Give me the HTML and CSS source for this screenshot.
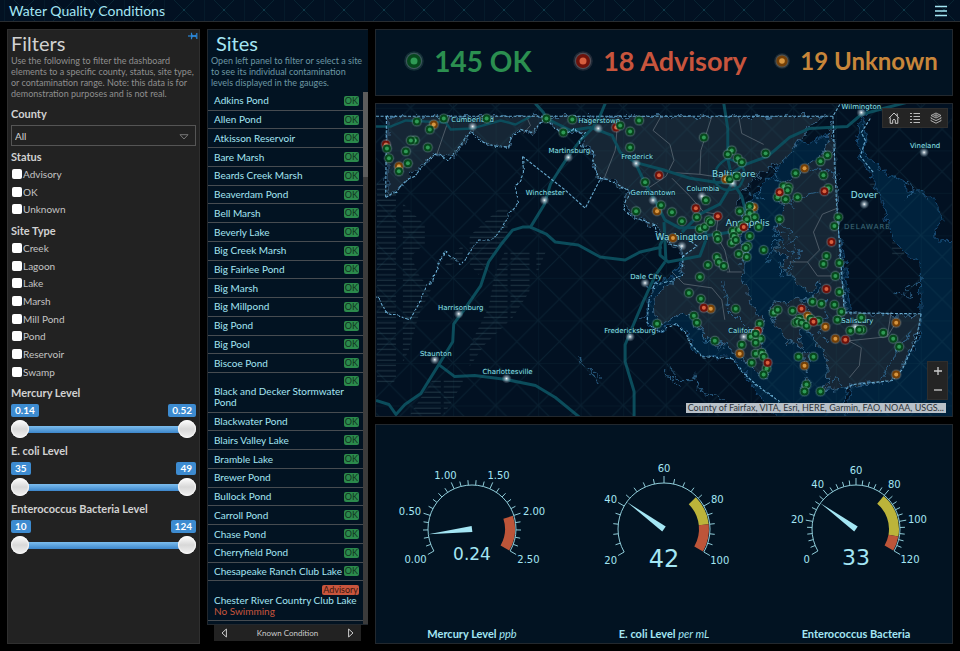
FILE: index.html
```html
<!DOCTYPE html>
<html lang="en">
<head>
<meta charset="utf-8">
<meta name="viewport" content="width=device-width, initial-scale=1">
<title>Water Quality Conditions</title>
<link rel="stylesheet" href="styles.css">
</head>
<body>
<header class="topbar">
  <svg class="topbar-pattern" aria-hidden="true">
    <defs>
      <pattern id="bar-grid" width="40" height="40" patternUnits="userSpaceOnUse" x="4" y="-10">
        <path d="M0 0V40M0 0L40 40M40 0L0 40" stroke="#082432" stroke-width="1" fill="none"/>
        <circle cx="20" cy="20" r="1" fill="#0f3f50"/>
      </pattern>
    </defs>
    <rect width="100%" height="100%" fill="url(#bar-grid)"/>
  </svg>
  <h1>Water Quality Conditions</h1>
  <button class="menu" type="button" aria-label="Menu">
    <svg width="12" height="12" viewBox="0 0 12 12"><path d="M0 1.5H12M0 6H12M0 10.5H12" stroke="#a4e6f4" stroke-width="1.4"/></svg>
  </button>
</header>

<main class="board">
  <aside class="panel filters">
    <button class="pin" type="button" aria-label="Pin panel">
      <svg width="10" height="8" viewBox="0 0 10 8"><path d="M0 4H3" stroke="#2b86d6" stroke-width="1.2"/><path d="M3.500 .8V7.200M8.800 1V7" stroke="#2b86d6" stroke-width="1.200"/><path d="M4 2.500L6 3.200L8.500 2.500V5.500L6 4.800L4 5.500Z" fill="#2b86d6"/></svg>
    </button>
    <h2>Filters</h2>
    <p class="intro">Use the following to filter the dashboard elements to a specific county, status, site type, or contamination range. Note: this data is for demonstration purposes and is not real.</p>
    <label class="group-title" for="county">County</label>
    <div class="select-wrap">
      <select id="county"><option>All</option></select>
      <svg width="10" height="6" viewBox="0 0 10 6" aria-hidden="true"><path d="M1 .7H9L5 5Z" stroke="#777" fill="none"/></svg>
    </div>
    <fieldset>
      <legend class="group-title">Status</legend>
      <label class="check"><input type="checkbox">Advisory</label>
      <label class="check"><input type="checkbox">OK</label>
      <label class="check"><input type="checkbox">Unknown</label>
    </fieldset>
    <fieldset>
      <legend class="group-title">Site Type</legend>
      <label class="check"><input type="checkbox">Creek</label>
      <label class="check"><input type="checkbox">Lagoon</label>
      <label class="check"><input type="checkbox">Lake</label>
      <label class="check"><input type="checkbox">Marsh</label>
      <label class="check"><input type="checkbox">Mill Pond</label>
      <label class="check"><input type="checkbox">Pond</label>
      <label class="check"><input type="checkbox">Reservoir</label>
      <label class="check"><input type="checkbox">Swamp</label>
    </fieldset>
    <fieldset class="range">
      <legend class="group-title">Mercury Level</legend>
      <div class="range-values"><output>0.14</output><output>0.52</output></div>
      <div class="range-track">
        <input type="range" min="0.14" max="0.52" step="0.01" value="0.14" aria-label="Mercury minimum">
        <input type="range" min="0.14" max="0.52" step="0.01" value="0.52" aria-label="Mercury maximum">
      </div>
    </fieldset>
    <fieldset class="range">
      <legend class="group-title">E. coli Level</legend>
      <div class="range-values"><output>35</output><output>49</output></div>
      <div class="range-track">
        <input type="range" min="35" max="49" value="35" aria-label="E. coli minimum">
        <input type="range" min="35" max="49" value="49" aria-label="E. coli maximum">
      </div>
    </fieldset>
    <fieldset class="range">
      <legend class="group-title">Enterococcus Bacteria Level</legend>
      <div class="range-values"><output>10</output><output>124</output></div>
      <div class="range-track">
        <input type="range" min="10" max="124" value="10" aria-label="Enterococcus minimum">
        <input type="range" min="10" max="124" value="124" aria-label="Enterococcus maximum">
      </div>
    </fieldset>
  </aside>

  <section class="sites">
    <div class="panel sites-panel">
      <h2>Sites</h2>
      <p class="intro">Open left panel to filter or select a site to see its individual contamination levels displayed in the gauges.</p>
      <div class="scroll">
        <ul class="site-list">
          <li>Adkins Pond<span class="tag">OK</span></li>
          <li>Allen Pond<span class="tag">OK</span></li>
          <li>Atkisson Reservoir<span class="tag">OK</span></li>
          <li>Bare Marsh<span class="tag">OK</span></li>
          <li>Beards Creek Marsh<span class="tag">OK</span></li>
          <li>Beaverdam Pond<span class="tag">OK</span></li>
          <li>Bell Marsh<span class="tag">OK</span></li>
          <li>Beverly Lake<span class="tag">OK</span></li>
          <li>Big Creek Marsh<span class="tag">OK</span></li>
          <li>Big Fairlee Pond<span class="tag">OK</span></li>
          <li>Big Marsh<span class="tag">OK</span></li>
          <li>Big Millpond<span class="tag">OK</span></li>
          <li>Big Pond<span class="tag">OK</span></li>
          <li>Big Pool<span class="tag">OK</span></li>
          <li>Biscoe Pond<span class="tag">OK</span></li>
          <li class="tall"><span class="tag">OK</span><span>Black and Decker Stormwater Pond</span></li>
          <li>Blackwater Pond<span class="tag">OK</span></li>
          <li>Blairs Valley Lake<span class="tag">OK</span></li>
          <li>Bramble Lake<span class="tag">OK</span></li>
          <li>Brewer Pond<span class="tag">OK</span></li>
          <li>Bullock Pond<span class="tag">OK</span></li>
          <li>Carroll Pond<span class="tag">OK</span></li>
          <li>Chase Pond<span class="tag">OK</span></li>
          <li>Cherryfield Pond<span class="tag">OK</span></li>
          <li>Chesapeake Ranch Club Lake<span class="tag">OK</span></li>
          <li class="tall"><span class="tag tag-advisory">Advisory</span><span>Chester River Country Club Lake</span><span class="warn">No Swimming</span></li>
        </ul>
        <div class="scroll-track"><div class="scroll-thumb"></div></div>
      </div>
    </div>
    <nav class="pager">
      <button type="button" aria-label="Previous"><svg width="6" height="10" viewBox="0 0 6 10"><path d="M5.4 1V9L1 5Z" stroke="#ccc" fill="none"/></svg></button>
      <span>Known Condition</span>
      <button type="button" aria-label="Next"><svg width="6" height="10" viewBox="0 0 6 10"><path d="M.6 1V9L5 5Z" stroke="#ccc" fill="none"/></svg></button>
    </nav>
  </section>

  <div class="content">
    <section class="panel indicators">
      <div class="indicator ok"><svg width="20" height="20" viewBox="0 0 20 20"><use href="#m-ok" transform="translate(10 10) scale(1.75)"/></svg>145 OK</div>
      <div class="indicator advisory"><svg width="20" height="20" viewBox="0 0 20 20"><use href="#m-advisory" transform="translate(10 10) scale(1.75)"/></svg>18 Advisory</div>
      <div class="indicator unknown"><svg width="16" height="16" viewBox="0 0 20 20"><use href="#m-unknown" transform="translate(10 10) scale(1.75)"/></svg>19 Unknown</div>
    </section>

    <section class="panel map">
      <svg class="map-canvas" viewBox="375 103 578 314" preserveAspectRatio="xMidYMid slice" role="img" aria-label="Map of monitoring sites in Maryland">
        <defs>
          <g id="m-ok"><circle r="5.600" fill="#9fc" opacity=".12"/><circle r="4.700" fill="#9eb5b5" opacity=".3"/><circle r="4" fill="#06481d"/><circle r="2" fill="#2f9a55"/></g>
          <g id="m-advisory"><circle r="5.600" fill="#fcc" opacity=".12"/><circle r="4.700" fill="#c0a5a5" opacity=".3"/><circle r="4" fill="#6e120b"/><circle r="2" fill="#d8603f"/></g>
          <g id="m-unknown"><circle r="5.600" fill="#fec" opacity=".12"/><circle r="4.700" fill="#c0b09a" opacity=".3"/><circle r="4" fill="#744008"/><circle r="2" fill="#d8963f"/></g>
          <radialGradient id="star"><stop offset="0" stop-color="#fff"/><stop offset=".3" stop-color="#b5c8d4" stop-opacity=".75"/><stop offset="1" stop-color="#7f98a8" stop-opacity="0"/></radialGradient>
          <circle id="city" r="5" fill="url(#star)"/>
          <pattern id="grid" width="42.667" height="42.667" x="409.7" y="107.3" patternUnits="userSpaceOnUse">
            <path d="M0 0H42.7M0 0V42.7M0 0L42.7 42.7M42.7 0L0 42.7" stroke="#2a6070" stroke-opacity=".2" fill="none"/>
          </pattern>
          <pattern id="hatch" width="67" height="5.35" patternUnits="userSpaceOnUse"><path d="M0 2H38M41 2H60" stroke="#253c49" stroke-width="1"/></pattern>
          <filter id="coast" x="-5%" y="-5%" width="110%" height="110%">
            <feTurbulence type="fractalNoise" baseFrequency=".13" numOctaves="3" seed="4"/>
            <feDisplacementMap in="SourceGraphic" scale="11" xChannelSelector="R" yChannelSelector="G"/>
          </filter>
          <filter id="bank" x="-5%" y="-5%" width="110%" height="110%">
            <feTurbulence type="fractalNoise" baseFrequency=".12" numOctaves="2" seed="9"/>
            <feDisplacementMap in="SourceGraphic" scale="5" xChannelSelector="R" yChannelSelector="G"/>
          </filter>
        </defs>

        <rect x="0" y="0" width="1400" height="800" fill="#021122"/>

        <g fill="url(#hatch)">
          <path d="M375 180L388 180L404 205L424 225L424 244L410 256L418 275L430 290L418 315L408 350L392 385L375 385Z"/>
          <path d="M500 207H512L508 232L492 256L478 275L464 258L440 270L470 235Z"/>
          <path d="M505 250H546L530 290L512 318L484 345L468 368L466 352L488 308L494 275Z"/>
          <path d="M432 380H464L442 417H408Z"/>
          <path d="M893 228H905V256H893ZM868 180H880V188H868Z"/>
        </g>

        <g filter="url(#coast)" fill="#04233d" stroke="#164a74" stroke-width="1">
          <path d="M862 110L868 112L864 124L867 138L863 152L875 163L892 176L906 182L908 192L923 190L938 202L944 220L936 230L937 240L965 241V430H845L853 386L893 381L920 340L922 317L921 262L908 254L896 242L888 222L882 196L874 180L861 158L858 140L860 128Z"/>
          <path d="M793 150L800 140L812 142L828 134L829 150L850 300L845 430H790L760 397L744 373L732 358L702 356L694 348L684 330L674 323L660 333L648 322L648 300L656 282L672 277L682 262L700 280L730 300L745 320L735 220Z"/>
        </g>

        <g filter="url(#coast)" fill="#192634" stroke="#3a6a8e" stroke-width=".9">
          <path d="M386 116H824L808 128L794 148L786 158L772 166L760 176L750 183L741 195L737 203L744 210L752 214L747 228L742 240L746 250L743 265L744 280L748 295L756 310L764 322L759 334L764 350L770 370L766 380L752 367L736 354L724 344L715 347L704 335L696 324L685 312L673 318L662 327L655 318L654 300L661 290L672 283L683 272L682 250L670 244L660 236L657 226L640 220L629 212L625 203L630 192L612 180L597 178L593 160L590 148L583 145L582 132L563 132L552 122L543 120L532 132L520 130L512 136L508 147L485 142L472 132L465 138L452 158L440 154L425 160L404 182L386 196Z"/>
          <path d="M833 118L828 140L824 153L808 164L800 172L790 178L780 188L777 200L786 204L780 216L776 228L784 240L774 250L788 256L780 268L792 275L800 288L812 294L818 282L822 288L812 300L800 298L786 304L774 302L770 310L778 328L788 342L802 348L800 330L812 332L814 344L824 350L829 364L828 380L820 394L832 390L847 388L855 385L893 381L904 366L918 332L921 316L846 313L842 270L838 200Z"/>
          <path d="M804 350L810 356L806 372ZM806 378L811 386L805 396L802 388Z"/>
        </g>

        <g filter="url(#coast)" fill="none" stroke="#2f678f" stroke-width=".9">
          <path d="M771 166L780 182L770 178M757 184L764 200L750 192M748 202L758 208M735 208L744 218L736 222M724 283L728 310L738 320L752 334M692 308L700 322L706 342L714 340M712 340L722 346M768 262L776 240L794 252L786 270L800 258L796 244M776 224L792 230L788 242L800 236M780 200L796 206M802 300L812 312L806 328L816 336M826 300L828 316L820 332L830 344M826 190L800 196L788 202M836 170L812 170M778 262L782 278L796 266M823 394L836 376L844 386M882 380L900 350L912 332M895 292L912 296L906 288L920 284M663 370L680 390M577 359L588 367L597 384M588 367L600 378M780 214L774 236L784 232M694 374L702 396L720 398L734 412M669 366L676 380L692 380"/>
          <path d="M906 182L916 188L908 198M655 290L648 286M648 316L640 320"/>
        </g>

        <g fill="none" stroke="#5c6873" stroke-width=".8">
          <path d="M449 116L436 154M526 116L530 125L523 133M618 116L615 150L604 178M661 116L653 130L670 144L674 160L666 176L645 190M712 116L701 150L700 174L668 172M739 116L742 133L764 144M700 174L740 180M672 178L690 196L704 212L718 214M718 220L716 234L725 250L730 272M727 272H742M672 272L684 284L712 288L722 300L725 320M838 208L823 214L814 232L820 250L808 262L790 262M808 262L818 276L836 276M849 341L862 348L860 366L850 378M850 341L888 337L892 312M888 337L896 324"/>
        </g>

        <g fill="none" stroke="#0b4c5b" stroke-width="3" stroke-linejoin="round">
          <path d="M375 126H390L405 120L445 122L450 129L472 128L500 120L515 124L530 116" stroke-width="2.4"/>
          <path d="M375 401L388 405L395 415L404 405L420 394L438 365L452 342L453 324L462 312L480 286L488 262L500 245L512 230L522 227L530 227L544 204L550 184L560 168L568 156L580 140L592 128L600 115L605 103"/>
          <path d="M530 227L546 234L555 242L578 245L600 257L625 260L640 252L662 247M438 365L454 377L474 376L506 380L535 386L555 398L582 420M535 103L543 112L546 118L570 130L590 127L612 135L620 152L635 162L645 183L655 200L665 220L680 228L706 227L706 240L700 256L668 262L660 255L660 245L665 236"/>
          <path d="M635 162L665 170L690 178L716 182L734 183M724 103L728 128L728 158L733 182L720 204L700 214L682 232M733 172L746 164L768 156L790 137L810 128L848 126L862 114L884 108L953 90M733 182L742 196L748 220L732 232L690 238M665 262L655 276L643 302L632 328L625 345L625 362L634 392V420M664 222L666 262"/>
          <path d="M728 158Q714 165 714 180Q724 196 740 186Q750 170 738 162Z" stroke-width="2.4"/>
        </g>

        <g fill="none" stroke="#68abd0" stroke-width="1.1" stroke-dasharray="3 1.6">
          <path d="M375 115.700H833.500L841 103M833.500 115.700L837 200L842 270L845 313L922 314M385.500 116L384.700 197M522 156L565 190L585 208L600 179"/>
          <path filter="url(#bank)" d="M385 197L395 192L403 182L413 177L423 165L432 156L438 154L448 160L453 153L462 142L470 131L476 138L485 143L497 146L508 148L512 137L520 129L532 132L543 119L553 125L563 135L573 129L585 133L580 140L583 149L592 150L593 160L597 178L608 179L618 185L629 192L623 207L632 217L655 225L657 233L670 243L681 246"/>
          <path filter="url(#bank)" d="M522 156L523 172L515 188L518 203L508 215L500 230L490 240L478 240L470 252L460 265L444 252L435 270L432 282L425 285L418 304L409 320L385 312L378 298H375"/>
          <path filter="url(#bank)" d="M681 246L683 262L682 275L672 281L656 284L649 300L647 323L660 332L676 324L685 332L693 348L702 357L732 359L744 374L760 388L780 402"/>
          <path d="M682 257L697 246L688 239M871 118L862 132L866 140L861 156L874 172M922 314L917 340L903 370L893 381L853 385L846 390"/>
        </g>

        <rect x="0" y="0" width="1400" height="800" fill="url(#grid)"/>

        <g class="cities">
          <use href="#city" x="472" y="126"/><use href="#city" x="598" y="128"/><use href="#city" x="568" y="157"/><use href="#city" x="544" y="200"/><use href="#city" x="636" y="163"/><use href="#city" x="653" y="200"/><use href="#city" x="733" y="183"/><use href="#city" x="702" y="196"/><use href="#city" x="682" y="246"/><use href="#city" x="862" y="112"/><use href="#city" x="925" y="152"/><use href="#city" x="865" y="204"/><use href="#city" x="645" y="283"/><use href="#city" x="458" y="314"/><use href="#city" x="434" y="360"/><use href="#city" x="506" y="379"/><use href="#city" x="630" y="337"/><use href="#city" x="744" y="337"/><use href="#city" x="856" y="327"/>
          <text x="472" y="122">Cumberland</text><text x="599" y="123">Hagerstown</text><text x="569" y="153">Martinsburg</text><text x="545" y="195">Winchester</text><text x="637" y="159">Frederick</text><text x="653" y="195">Germantown</text><text x="703" y="191">Columbia</text><text x="862" y="108">Wilmington</text><text x="926" y="148">Vineland</text><text x="646" y="279">Dale City</text><text x="460" y="310">Harrisonburg</text><text x="435" y="356">Staunton</text><text x="507" y="374">Charlottesville</text><text x="630" y="333">Fredericksburg</text><text x="745" y="333">California</text><text x="858" y="323">Salisbury</text>
          <text class="big" x="734" y="177">Baltimore</text><text class="big" x="748" y="226">Annapolis</text><text class="big" x="682" y="240">Washington</text><text class="big" x="865" y="198">Dover</text>
          <text class="state" x="868" y="229">DELAWARE</text>
        </g>
        <g id="markers"></g>
      </svg>

      <div class="map-tools">
        <button type="button" aria-label="Home"><svg width="12" height="12" viewBox="0 0 12 12"><path d="M1 6.200L6 1L11 6.200M2.200 5.500V11.300H4.700V8.200Q6 6.400 7.300 8.200V11.300H9.800V5.500M9.200 4V1.500" stroke="#ccc" fill="none"/></svg></button>
        <button type="button" aria-label="Legend"><svg width="12" height="12" viewBox="0 0 12 12"><path d="M1 1.500H3M1 4.500H3M1 7.500H3M1 10.500H3M4.500 1.500H11M4.500 4.500H11M4.500 7.500H11M4.500 10.500H11" stroke="#bbb" fill="none"/></svg></button>
        <button type="button" aria-label="Layers"><svg width="12" height="12" viewBox="0 0 12 12"><path d="M6 1L11 3.500L6 6L1 3.500ZM1 5.200V6.200L6 8.600L11 6.200V5.200M1 7.700V8.700L6 11.200L11 8.700V7.700" stroke="#bbb" stroke-width=".9" fill="none"/><path d="M3 3.500L6 2L9 3.500L6 5Z" fill="#888"/></svg></button>
      </div>
      <div class="map-zoom">
        <button type="button" aria-label="Zoom in"><svg width="10" height="10" viewBox="0 0 10 10"><path d="M5 1V9M1 5H9" stroke="#ccc" stroke-width="1.300"/></svg></button>
        <button type="button" aria-label="Zoom out"><svg width="10" height="10" viewBox="0 0 10 10"><path d="M1 5H9" stroke="#ccc" stroke-width="1.300"/></svg></button>
      </div>
      <div class="attribution">County of Fairfax, VITA, Esri, HERE, Garmin, FAO, NOAA, USGS...</div>
    </section>

    <section class="panel gauges">
      <figure>
        <svg class="gauge" id="gauge-mercury" viewBox="0 0 192 150"></svg>
        <figcaption>Mercury Level <em>ppb</em></figcaption>
      </figure>
      <figure>
        <svg class="gauge" id="gauge-ecoli" viewBox="0 0 192 150"></svg>
        <figcaption>E. coli Level <em>per mL</em></figcaption>
      </figure>
      <figure>
        <svg class="gauge" id="gauge-entero" viewBox="0 0 192 150"></svg>
        <figcaption>Enterococcus Bacteria</figcaption>
      </figure>
    </section>
  </div>
</main>
<script src="app.js"></script>
</body>
</html>
```
FILE: styles.css
```css
* { box-sizing: border-box; }

body {
  margin: 0;
  height: 100vh;
  display: flex;
  flex-direction: column;
  background: #000;
  color: #a4e6f4;
  font-family: Lato, "Liberation Sans", sans-serif;
  font-size: 10px;
}

h1, h2, p, ul, figure, fieldset { margin: 0; padding: 0; }
fieldset { border: 0; min-width: 0; }
legend { padding: 0; }
button { border: 0; padding: 0; background: none; display: flex; align-items: center; justify-content: center; }

.topbar {
  position: relative;
  flex: none;
  height: 22px;
  display: flex;
  align-items: center;
  justify-content: space-between;
  padding: 0 13px 0 9px;
  background: #021122;
  border-bottom: 1px solid #292d31;
  overflow: hidden;
}
.topbar-pattern { position: absolute; inset: 0; width: 100%; height: 100%; }
.topbar h1 { position: relative; font-size: 14px; font-weight: 400; }
.menu { position: relative; }

.board {
  flex: 1;
  min-height: 0;
  display: grid;
  grid-template-columns: 193px 161px minmax(0, 1fr);
  gap: 7px;
  padding: 7px;
}
.panel { background: #021322; border: 1px solid #22282e; }

h2 { font-size: 20px; line-height: 24px; font-weight: 400; }
.intro { font-size: 9px; line-height: 11px; }

.filters { position: relative; background: #222; border-color: #2f2f2f; color: #d2d2d2; padding: 1px 3px; }
.filters .intro { color: #8f8f8f; margin: 0 -3px 7px 0; }
.pin { position: absolute; top: 2px; right: 1px; }
.group-title { display: block; font-size: 11px; line-height: 16px; font-weight: 700; }

.select-wrap { position: relative; margin: 3px 0; }
.select-wrap select {
  width: 100%;
  height: 21px;
  appearance: none;
  background: #222;
  border: 1px solid #555;
  border-radius: 0;
  color: #d2d2d2;
  font: inherit;
  padding: 0 3px;
}
.select-wrap svg { position: absolute; right: 7px; top: 9px; }

.check { display: flex; align-items: center; gap: 1px; height: 18px; color: #c4c4c4; }
.check:nth-of-type(3n + 2) { height: 17px; }
.check input { appearance: none; width: 10px; height: 10px; margin: 0 0 0 1px; background: #fff; border-radius: 2px; }
fieldset + fieldset { margin-top: 5px; }
.range + .range { margin-top: 2px; }

.range-values { display: flex; justify-content: space-between; margin-top: 3px; }
.range-values output {
  background: #3d8bd0;
  color: #fff;
  font-weight: 700;
  line-height: 13px;
  padding: 0 4px;
  border-radius: 2px;
}
.range-track { position: relative; height: 24px; }
.range-track::before {
  content: "";
  position: absolute;
  left: 9px;
  right: 9px;
  top: 9px;
  height: 7px;
  background: linear-gradient(#7cbdee, #3c86cb);
}
.range-track input {
  position: absolute;
  inset: 0;
  width: 100%;
  height: 24px;
  margin: 0;
  appearance: none;
  background: none;
  pointer-events: none;
}
.range-track input::-webkit-slider-thumb {
  appearance: none;
  pointer-events: auto;
  width: 18px;
  height: 18px;
  border-radius: 50%;
  background: linear-gradient(#fff, #d8d8d8 50%, #f2f2f2);
  box-shadow: inset 0 0 1px 1px #f8f8f8;
}

.sites { display: flex; flex-direction: column; min-height: 0; }
.sites-panel { flex: 1; min-height: 0; display: flex; flex-direction: column; padding-top: 1px; border-right: 0; }
.sites h2 { padding-left: 8px; }
.sites .intro { color: #6c97a4; padding: 0 3px 4px; }
.scroll { flex: 1; min-height: 0; display: flex; }
.site-list { flex: 1; min-width: 0; list-style: none; display: flex; flex-direction: column; padding-bottom: 3px; overflow: hidden; }
.site-list li {
  flex: 1 0 18px;
  display: flex;
  align-items: center;
  justify-content: space-between;
  padding: 0 4px 0 6px;
  border-bottom: 1px solid #474c51;
  line-height: 11px;
  white-space: nowrap;
}
.site-list .tall { flex-basis: 39px; flex-direction: column; align-items: flex-start; justify-content: center; white-space: normal; }
.tall .tag { align-self: flex-end; }
.warn { color: #c8553d; }
.tag { background: #2b8a4c; color: #12331f; font-size: 9px; line-height: 10px; padding: 0 1px; border-radius: 2px; }
.tag-advisory { background: #c8553d; color: #3c1710; }
.scroll-track { width: 5px; background: #3b3b3b; }
.scroll-thumb { height: 16%; background: #5c5c5c; }

.pager {
  display: flex;
  justify-content: space-between;
  align-items: center;
  height: 16px;
  margin: 0 7px 3px;
  padding: 0 7px;
  background: #222;
  color: #ccc;
  font-size: 8px;
}

.content { display: grid; grid-template-rows: 67fr 314fr 220fr; gap: 7px; min-height: 0; }

.indicators { display: grid; grid-template-columns: repeat(3, 1fr); padding-bottom: 4px; }
.indicator { display: flex; align-items: center; justify-content: center; gap: 10px; padding-right: 8px; font-size: 27px; font-weight: 700; white-space: nowrap; }
.ok { color: #2b8f50; font-size: 28px; }
.advisory { color: #c8553d; }
.unknown { color: #c8863a; font-size: 24px; padding-right: 0; }

.map { position: relative; min-height: 0; overflow: hidden; }
.map-canvas { display: block; width: 100%; height: 100%; }
.cities { fill: #8fe0ea; font-family: "DejaVu Sans", sans-serif; font-size: 7px; text-anchor: middle; }
.cities text { stroke: #04202f; stroke-width: 1px; paint-order: stroke; }
.cities .big { font-size: 9px; }
.cities .state { fill: #416675; letter-spacing: 1px; }
.map-tools { position: absolute; top: 4px; right: 4px; width: 66px; height: 20px; display: flex; justify-content: space-around; background: #242424; border: 1px solid #2e2e2e; }
.map-zoom { position: absolute; right: 4px; bottom: 16px; width: 21px; height: 39px; display: grid; grid-template-rows: 1fr 1fr; background: #242424; border: 1px solid #2e2e2e; }
.attribution { position: absolute; right: 6px; bottom: 3px; padding: 0 2px; background: #b9c1c9; color: #2d3238; font-size: 9px; line-height: 10px; white-space: nowrap; }

.gauges { display: grid; grid-template-columns: repeat(3, 1fr); }
.gauges figure { display: flex; flex-direction: column; justify-content: space-between; min-width: 0; min-height: 0; padding: 25px 0 3px; }
.gauge { flex: 1; min-height: 0; max-height: 150px; width: 100%; }
.gauges figcaption { text-align: center; font-size: 11px; line-height: 13px; font-weight: 700; }
.gauges em { font-weight: 400; }
.gauge text { fill: #a4e6f4; font-family: "DejaVu Sans", sans-serif; font-size: 10px; text-anchor: middle; }
.gauge .v-small { font-size: 17px; }
.gauge .v-mid { font-size: 22px; }
.gauge .v-large { font-size: 24px; }
```
FILE: app.js
```js
const SVG = "http://www.w3.org/2000/svg";

function add(parent, name, attrs, text) {
  const el = document.createElementNS(SVG, name);
  for (const key in attrs) el.setAttribute(key, attrs[key]);
  if (text !== undefined) el.textContent = text;
  parent.appendChild(el);
  return el;
}

const sites = {
  unknown: [[433,124],[398,166],[657,211],[805,168],[726,179],[673,238],[754,207],[711,309],[740,354],[808,316],[826,327],[836,339],[897,323],[897,375],[805,366]],
  ok: [[416,121],[429,129],[443,118],[486,118],[414,140],[410,140],[405,151],[427,147],[388,158],[407,163],[398,171],[546,118],[563,132],[572,119],[639,120],[630,131],[630,147],[645,182],[661,205],[636,211],
    [704,137],[732,150],[728,154],[738,158],[742,162],[766,153],[828,155],[821,161],[824,175],[796,173],[730,179],[737,176],[706,200],[672,212],[682,221],[697,217],[700,229],[705,227],[709,220],[711,222],
    [784,186],[789,187],[788,190],[778,197],[786,199],[798,197],[829,188],[740,211],[750,206],[750,213],[755,217],[747,219],[759,227],[780,219],[733,231],[739,230],[742,225],[734,236],[732,243],[736,240],[750,236],[717,235],[718,239],[748,246],[746,248],[747,257],[739,254],[764,250],[717,257],[719,262],[724,266],[708,265],
    [839,217],[835,226],[827,256],[824,264],[840,263],[700,277],[689,293],[701,299],[694,316],[697,323],[715,341],[736,309],[742,345],[760,324],[761,339],[751,337],[756,343],[756,354],[752,363],[762,353],[764,357],[767,369],[764,375],
    [774,313],[778,310],[793,311],[800,319],[796,323],[798,322],[802,323],[807,326],[811,319],[819,321],[813,302],[822,304],[835,305],[836,276],[840,292],[842,312],[838,320],[862,318],[851,331],[863,330],[860,330],[884,333],[894,339],[900,347],[799,357],[814,357],[807,385],[805,392],[821,392],[657,324]],
  advisory: [[385,144],[616,127],[659,175],[780,192],[825,191],[696,208],[718,216],[744,227],[832,242],[704,308],[802,309],[814,322],[846,340],[768,363],[827,289],[758,331]],
  // Sites stacked above a neighbouring advisory marker
  top: [[386,148],[620,125],[756,334]]
};

const layer = document.getElementById("markers");
for (const kind in sites) {
  const symbol = kind === "top" ? "#m-ok" : "#m-" + kind;
  for (const [x, y] of sites[kind]) add(layer, "use", { href: symbol, x, y });
}

function drawGauge(id, o) {
  const svg = document.getElementById(id);
  const cx = 96, cy = 79;
  const angle = v => (210 - 240 * (v - o.min) / (o.max - o.min)) * Math.PI / 180;
  const pt = (r, a) => (cx + r * Math.cos(a)).toFixed(2) + " " + (cy - r * Math.sin(a)).toFixed(2);

  for (const [from, to, color] of o.bands) {
    const a = angle(from), b = angle(to), outer = o.r - 1, inner = o.r - 11;
    add(svg, "path", {
      d: `M${pt(outer, a)}A${outer} ${outer} 0 0 1 ${pt(outer, b)}L${pt(inner, b)}A${inner} ${inner} 0 0 0 ${pt(inner, a)}Z`,
      fill: color
    });
  }
  let d = `M${pt(o.r, angle(o.min))}A${o.r} ${o.r} 0 1 1 ${pt(o.r, angle(o.max))}`;
  for (let i = 0; i <= o.ticks; i++) {
    const a = angle(o.min + (o.max - o.min) * i / o.ticks);
    d += `M${pt(o.r, a)}L${pt(o.r + (i % 5 ? 5 : 7), a)}`;
  }
  add(svg, "path", { d, fill: "none", stroke: "#8fccd9", "stroke-width": 1 });

  for (let i = 0; i <= o.ticks; i += 5) {
    const v = o.min + (o.max - o.min) * i / o.ticks;
    const label = v.toFixed(o.digits);
    const a = angle(v), r = o.r + 10, half = label.length * 2.8;
    add(svg, "text", { x: cx + (r + half) * Math.cos(a), y: cy - (r + 5) * Math.sin(a) + 4 }, label);
  }

  const a = angle(o.value);
  add(svg, "path", { d: `M${pt(o.r, a)}L${pt(3, a + Math.PI / 2)}L${pt(3, a - Math.PI / 2)}Z`, fill: "#a4e6f4" });
  add(svg, "text", { x: cx, y: o.baseline, class: o.size }, o.value);
}

drawGauge("gauge-mercury", { min: 0, max: 2.5, ticks: 25, digits: 2, value: 0.24, r: 44, baseline: 110, size: "v-small", bands: [[2, 2.5, "#bd5539"]] });
drawGauge("gauge-ecoli", { min: 20, max: 100, ticks: 20, digits: 0, value: 42, r: 46, baseline: 117, size: "v-large", bands: [[75, 88, "#bcb43a"], [88, 100, "#bd5539"]] });
drawGauge("gauge-entero", { min: 0, max: 120, ticks: 30, digits: 0, value: 33, r: 44, baseline: 115, size: "v-mid", bands: [[80, 110, "#bcb43a"], [110, 120, "#bd5539"]] });
```
